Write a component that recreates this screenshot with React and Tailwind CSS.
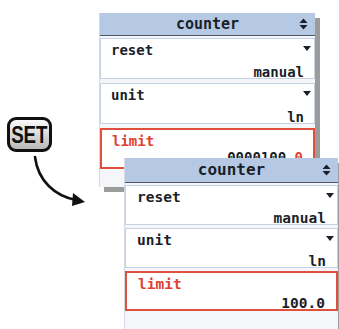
import React from 'react';

const mono = { fontFamily: '"DejaVu Sans Mono", "Liberation Mono", monospace' };

function UpDown() {
  return (
    <svg width="9" height="12" viewBox="0 0 9 12" className="absolute right-[7px] top-1/2 -translate-y-1/2">
      <polygon points="0.5,5 4.5,0.5 8.5,5" fill="#1b1f2a" />
      <polygon points="0.5,7 4.5,11.5 8.5,7" fill="#1b1f2a" />
    </svg>
  );
}

function Caret() {
  return (
    <svg width="8" height="5" viewBox="0 0 8 5" className="absolute right-[3px] top-[7px]">
      <polygon points="0,0 8,0 4,5" fill="#1b1f2a" />
    </svg>
  );
}

function Row({ label, value, red, caret, rowClass, textClass, valueClass = '' }) {
  return (
    <div
      className={`relative flex flex-col justify-between bg-white ${rowClass} ${
        red ? 'border-2 border-[#e0503f]' : 'border border-[#c4d2e4]'
      }`}
    >
      {caret && <Caret />}
      <span className={`font-bold leading-[14px] ${textClass} ${red ? 'text-[#e0412f]' : 'text-[#1b1f2a]'}`}>
        {label}
      </span>
      <span className={`self-end font-bold leading-[12px] text-[#1b1f2a] ${textClass} ${valueClass}`}>{value}</span>
    </div>
  );
}

function Panel({ className, headerClass, rowClass, gapClass, textClass, limitValue, limitValueClass }) {
  return (
    <div className={`absolute flex flex-col bg-[#f4f6f9] border-l border-[#d3dae3] ${className}`} style={mono}>
      <div className={`relative flex items-center justify-center bg-[#b5c9e5] border-b border-[#4c5869] ${headerClass}`}>
        <span className="font-bold text-[#1b1f2a]">counter</span>
        <UpDown />
      </div>
      <div className={`flex flex-col pt-[2px] ${gapClass}`}>
        <Row label="reset" value="manual" caret rowClass={rowClass} textClass={textClass} />
        <Row label="unit" value="ln" caret rowClass={rowClass} textClass={textClass} />
        <Row
          label="limit"
          value={limitValue}
          red
          rowClass={rowClass}
          textClass={textClass}
          valueClass={limitValueClass}
        />
      </div>
    </div>
  );
}

export default function App() {
  return (
    <div className="relative w-[339px] h-[329px] overflow-hidden bg-white">
      {/* back panel */}
      <Panel
        className="left-[99px] top-[13px] w-[216px] h-[174px] shadow-[5px_5px_0_#9c9c9c]"
        headerClass="h-[23px] text-[15px]"
        rowClass="h-[41px] pl-[10px] pr-[10px] pt-[4px]"
        gapClass="gap-[4px]"
        textClass="text-[14px]"
        limitValueClass="mb-[4px]"
        limitValue={
          <>
            0000100.<span className="text-[#e0412f]">0</span>
          </>
        }
      />

      {/* SET key */}
      <div className="absolute left-[7px] top-[117px] flex h-[35px] w-[45px] items-center justify-center rounded-[9px] border-[3px] border-[#111] bg-gradient-to-b from-[#fbfbfb] to-[#b9b9b9]">
        <span
          className="scale-x-[0.78] text-[24px] font-bold leading-none text-[#111]"
          style={{ fontFamily: '"Liberation Sans", Arial, sans-serif' }}
        >
          SET
        </span>
      </div>

      {/* arrow */}
      <svg width="100" height="70" viewBox="0 0 100 70" className="absolute left-0 top-[148px]">
        <path d="M35 9 C38 33 55 48 76 52" fill="none" stroke="#111" strokeWidth="2.6" strokeLinecap="round" />
        <polygon points="85,54 73,45 72,58" fill="#111" />
      </svg>

      {/* front panel */}
      <Panel
        className="left-[124px] top-[158px] w-[214px] h-[180px] shadow-[5px_5px_0_#9c9c9c]"
        headerClass="h-[25px] text-[16px]"
        rowClass="h-[40px] pl-[11px] pr-[11px] pt-[4px]"
        gapClass="gap-[3px]"
        textClass="text-[14.5px]"
        limitValue="100.0"
      />
    </div>
  );
}
